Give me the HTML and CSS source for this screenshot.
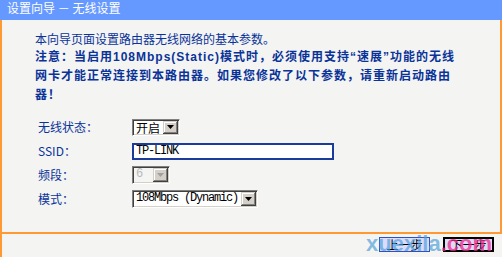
FILE: index.html
```html
<!DOCTYPE html>
<html lang="zh-CN">
<head>
    <meta charset="UTF-8">
    <title>设置向导 - 无线设置</title>
    <link rel="stylesheet" href="styles.css">
</head>
<body>
    <div class="page">
        <div class="title">设置向导 － 无线设置</div>

        <div class="panel">
            <p class="intro">本向导页面设置路由器无线网络的基本参数。</p>
            <p class="notice">注意：当启用108Mbps(Static)模式时，必须使用支持“速展”功能的无线网卡才能正常连接到本路由器。如果您修改了以下参数，请重新启动路由器！</p>

            <div class="form">
                <label class="form-label">无线状态：</label>
                <div>
                    <span class="combo combo-state">
                        <select class="combo-select">
                            <option>开启</option>
                            <option>关闭</option>
                        </select>
                        <span class="combo-arrow"><svg width="7" height="4" viewBox="0 0 7 4"><path d="M0 0h7L3.5 4z" fill="#000"/></svg></span>
                    </span>
                </div>

                <label class="form-label">SSID：</label>
                <div>
                    <input type="text" class="text-field" value="TP-LINK">
                </div>

                <label class="form-label">频段：</label>
                <div>
                    <span class="combo combo-channel disabled">
                        <select class="combo-select mono" disabled>
                            <option>6</option>
                        </select>
                        <span class="combo-arrow"><svg width="7" height="4" viewBox="0 0 7 4"><path d="M0 0h7L3.5 4z" fill="#a0a0a0"/></svg></span>
                    </span>
                </div>

                <label class="form-label">模式：</label>
                <div>
                    <span class="combo combo-mode">
                        <select class="combo-select mono">
                            <option>108Mbps (Dynamic)</option>
                            <option>108Mbps (Static)</option>
                            <option>54Mbps (802.11g)</option>
                        </select>
                        <span class="combo-arrow"><svg width="7" height="4" viewBox="0 0 7 4"><path d="M0 0h7L3.5 4z" fill="#000"/></svg></span>
                    </span>
                </div>
            </div>
        </div>

        <div class="actions">
            <button class="nav-button">上一步</button>
            <button class="nav-button default">下一步</button>
            <div class="watermark">xuexila<span class="watermark-com">.com</span></div>
        </div>
    </div>
</body>
</html>
```

FILE: styles.css
```css
body {
    margin: 0;
    padding: 0;
    background-color: #fff;
    font-family: "Noto Sans CJK SC", "Noto Sans", sans-serif;
    font-size: 12px;
}
.page {
    width: 502px;
    height: 257px;
}
.title {
    height: 20px;
    line-height: 16px;
    padding-left: 7px;
    background-color: #6699ff;
    color: #fff;
    font-size: 12px;
}
.panel {
    background-color: #f4f4f2;
    border-left: 2px solid #ff9933;
    border-right: 2px solid #ff9933;
    border-bottom: 2px solid #ff9933;
    padding: 9px 0 22px 33px;
}
.intro,
.notice {
    margin: 0;
    line-height: 19px;
    color: #0a3399;
}
.notice {
    width: 432px;
    font-family: "Liberation Sans", "Noto Sans CJK SC", sans-serif;
    font-weight: bold;
    letter-spacing: 1px;
}
.form {
    display: grid;
    grid-template-columns: 94px auto;
    grid-auto-rows: 24px;
    align-items: center;
    margin: 9px 0 0 3px;
}
.form-label {
    color: #0a3399;
}
.combo {
    display: inline-flex;
    align-items: stretch;
    box-sizing: border-box;
    height: 17px;
    vertical-align: middle;
    background-color: #fff;
    border: 1px solid;
    border-color: #808080 #fff #fff #808080;
    box-shadow: inset 1px 1px #404040, inset -1px -1px #d4d0c8;
    padding: 1px;
}
.combo-state { width: 48px; }
.combo-channel { width: 38px; height: 18px; }
.combo-mode { width: 126px; height: 18px; }
.combo.disabled {
    background-color: #f4f4f2;
}
.combo-select {
    flex: 1;
    min-width: 0;
    -webkit-appearance: none;
    appearance: none;
    border: none;
    outline: none;
    background: transparent;
    padding: 0 0 0 2px;
    margin: 0;
    font-family: "Noto Sans CJK SC", sans-serif;
    font-size: 12px;
    line-height: 13px;
    color: #000;
}
.combo-select.mono {
    font-family: "Liberation Mono", "DejaVu Sans Mono", monospace;
    letter-spacing: -1.2px;
}
.combo-select:disabled {
    color: #a0a0a0;
}
.combo-arrow {
    width: 15px;
    display: flex;
    align-items: center;
    justify-content: center;
    background-color: #d4d0c8;
    box-shadow: inset -1px -1px #404040, inset 1px 1px #d4d0c8, inset -2px -2px #808080, inset 2px 2px #fff;
}
.text-field {
    box-sizing: border-box;
    width: 202px;
    height: 17px;
    border: 2px solid #1c3c9c;
    padding: 0 0 0 2px;
    margin: 0;
    vertical-align: middle;
    font-family: "Liberation Mono", "DejaVu Sans Mono", monospace;
    font-size: 12px;
    letter-spacing: -1.2px;
    color: #000;
    outline: none;
}
.actions {
    position: relative;
    display: flex;
    justify-content: flex-end;
    gap: 13px;
    height: 23px;
    padding: 3px 8px 0 0;
    box-sizing: border-box;
    background-color: #f4f4f2;
    border-left: 2px solid #ff9933;
}
.nav-button {
    box-sizing: border-box;
    width: 51px;
    height: 15px;
    padding: 0;
    border: 1px solid #3050c0;
    background-color: #dcdcfa;
    font-family: "Noto Sans CJK SC", sans-serif;
    font-size: 12px;
    line-height: 12px;
    color: #000;
}
.nav-button.default {
    border: 2px solid #000;
}
.watermark {
    position: absolute;
    right: 10px;
    top: -1px;
    font-family: "Liberation Sans", sans-serif;
    font-weight: bold;
    font-size: 22px;
    line-height: 22px;
    color: rgba(80, 160, 220, 0.7);
    pointer-events: none;
}
.watermark-com {
    color: rgba(240, 40, 140, 0.75);
}
```
